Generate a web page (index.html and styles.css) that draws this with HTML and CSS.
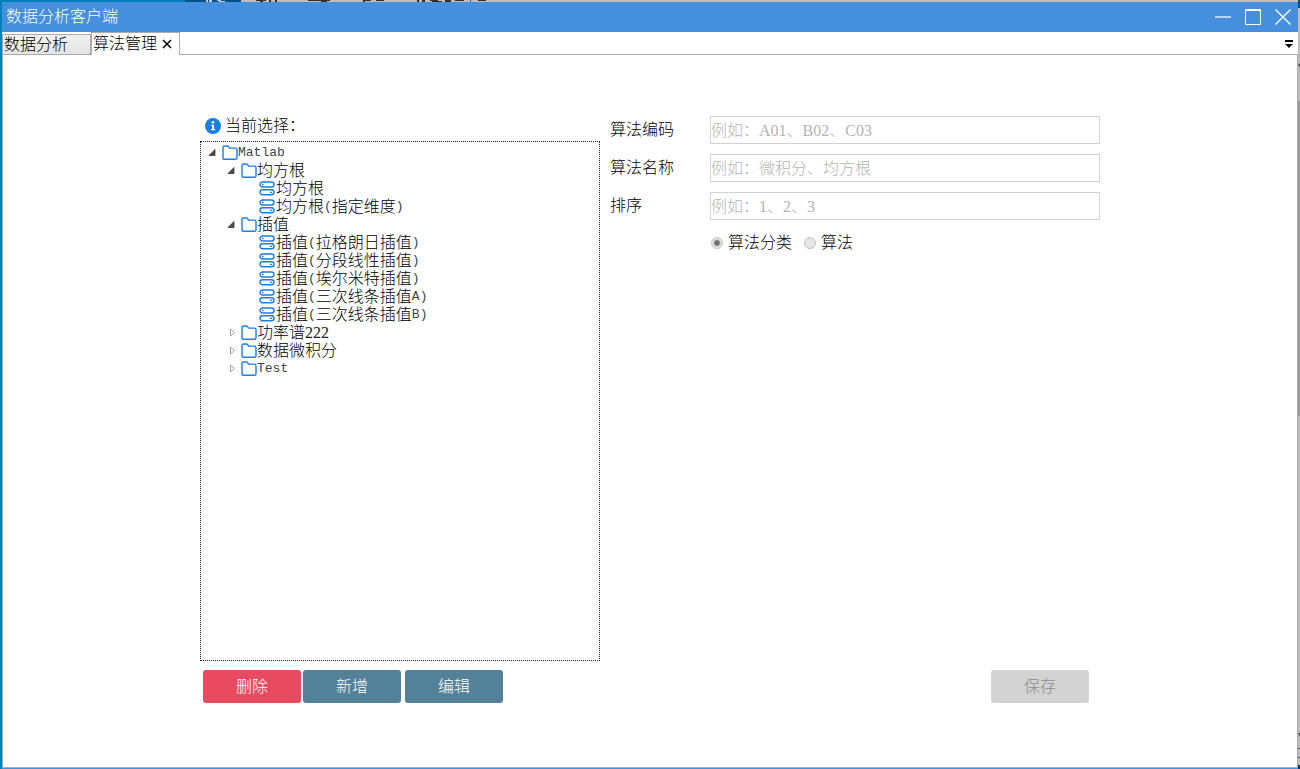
FILE: index.html
```html
<!DOCTYPE html>
<html lang="zh-CN">
<head>
<meta charset="utf-8">
<title>数据分析客户端</title>
<link rel="stylesheet" href="styles.css">
</head>
<body>
<svg class="symbols" aria-hidden="true">
  <symbol id="folder" viewBox="0 0 16 16"><path d="M1 2.7Q1 1 2.6 1H5.4Q6.5 1 7 2.1L7.5 3.1H13.4Q15 3.1 15 4.700V12.700Q15 14.300 13.400 14.300H2.600Q1 14.300 1 12.700Z" fill="#fff" stroke="#1a7ee0" stroke-width="1.4"/></symbol>
  <symbol id="algo" viewBox="0 0 16 16"><g fill="#fff" stroke="#1a7ee0" stroke-width="1.4"><rect x="1" y="1" width="14" height="5" rx="2.5"/><rect x="1" y="8.8" width="14" height="5" rx="2.5"/></g><path d="M3 3.500h1.500M11 11.300h2" stroke="#1a7ee0" stroke-width="1.3"/></symbol>
  <symbol id="open" viewBox="0 0 8 8"><path d="M7 .5V6.500H1Z" fill="#505050" stroke="#262626" stroke-width=".7"/></symbol>
  <symbol id="closed" viewBox="0 0 8 8"><path d="M3.500 0V7L7.500 3.500Z" fill="#fff" stroke="#a0a0a0"/></symbol>
</svg>
<div class="desktop">
  <svg class="sliver-top" width="500" height="2" aria-hidden="true">
    <path d="M0 0H185V2H0Z" fill="#0080b8"/><path d="M185 0H241V2H185Z" fill="#00508a"/>
    <path d="M206 0h2v2h-2zM209 0h3v2h-3zM217 0h4v1h-4zM219 1h6v1h-6z" fill="#b8cbd8"/>
    <path d="M256 0h10v1h-10zM260 1h3v1h-3zM269 0h2v2h-2zM275 0h2v2h-2zM308 0h22v1h-22zM321 1h6v1h-6zM363 0h8v1h-8zM363 1h2v1h-2zM376 0h8v1h-8zM417 0h2v2h-2zM422 0h3v2h-3zM430 0h8v1h-8zM432 1h10v1h-10zM445 0h6v2h-6zM455 0h9v1h-9zM478 0h8v1h-8z" fill="#303030"/>
    <path d="M470 0h1v2h-1z" fill="#2869ae"/>
  </svg>
  <svg class="sliver-right" width="2" height="769" aria-hidden="true">
    <path d="M0 0H2V8H0Z" fill="#00508a"/><path d="M0 101H2V416H0Z" fill="#9a9a9a"/>
    <path d="M0 65l2-2v4zM0 733h2v4zM0 748h2v1h-2zM0 757h2v1h-2z" fill="#444"/><path d="M0 765H2V769H0Z" fill="#003a78"/>
  </svg>
  <main class="window">
    <header class="titlebar">
      <h1 class="title">数据分析客户端</h1>
      <button class="wbtn" aria-label="最小化"><svg width="18" height="18"><path d="M1 9H17" stroke="#b9d3f1" stroke-width="2"/></svg></button>
      <button class="wbtn" aria-label="最大化"><svg width="18" height="18"><path d="M1.500 1.500H16.500V16.500H1.500ZM1 2.500H17" fill="none" stroke="#fff"/></svg></button>
      <button class="wbtn" aria-label="关闭"><svg width="18" height="18"><path d="M1.500 1.500L16.500 16.500M16.500 1.500L1.500 16.500" stroke="#fff" stroke-width="1.4"/></svg></button>
    </header>
    <nav class="tabs">
      <button class="tab">数据分析</button>
      <div class="tab tab-active"><span>算法管理</span><button class="tab-close" aria-label="关闭标签"><svg width="10" height="10"><path d="M1 1L9 9M9 1L1 9" stroke="#000" stroke-width="1.5"/></svg></button></div>
      <button class="tab-menu" aria-label="标签列表"><svg width="8" height="8"><path d="M0 0H8V2H0ZM0 4H8L4 8Z"/></svg></button>
    </nav>
    <section class="content">
      <div class="panel">
        <div class="left">
          <div class="current"><svg width="16" height="16" viewBox="0 0 16 16"><circle cx="8" cy="8" r="8" fill="#1a7ee0"/><circle cx="8" cy="4.200" r="1.300" fill="#fff"/><path d="M6 6.700H9V11H10.200V12.300H6V11H7V8H6Z" fill="#fff"/></svg><span>当前选择：</span></div>
          <ul class="tree">
            <li class="node"><svg class="arrow"><use href="#open"/></svg><svg class="icon"><use href="#folder"/></svg><span class="latin">Matlab</span></li>
            <li class="node level-1"><svg class="arrow"><use href="#open"/></svg><svg class="icon"><use href="#folder"/></svg>均方根</li>
            <li class="node level-2"><svg class="icon"><use href="#algo"/></svg>均方根</li>
            <li class="node level-2"><svg class="icon"><use href="#algo"/></svg>均方根<span class="latin">(</span>指定维度<span class="latin">)</span></li>
            <li class="node level-1"><svg class="arrow"><use href="#open"/></svg><svg class="icon"><use href="#folder"/></svg>插值</li>
            <li class="node level-2"><svg class="icon"><use href="#algo"/></svg>插值<span class="latin">(</span>拉格朗日插值<span class="latin">)</span></li>
            <li class="node level-2"><svg class="icon"><use href="#algo"/></svg>插值<span class="latin">(</span>分段线性插值<span class="latin">)</span></li>
            <li class="node level-2"><svg class="icon"><use href="#algo"/></svg>插值<span class="latin">(</span>埃尔米特插值<span class="latin">)</span></li>
            <li class="node level-2"><svg class="icon"><use href="#algo"/></svg>插值<span class="latin">(</span>三次线条插值<span class="latin">A)</span></li>
            <li class="node level-2"><svg class="icon"><use href="#algo"/></svg>插值<span class="latin">(</span>三次线条插值<span class="latin">B)</span></li>
            <li class="node level-1"><svg class="arrow"><use href="#closed"/></svg><svg class="icon"><use href="#folder"/></svg>功率谱<span class="digits">222</span></li>
            <li class="node level-1"><svg class="arrow"><use href="#closed"/></svg><svg class="icon"><use href="#folder"/></svg>数据微积分</li>
            <li class="node level-1"><svg class="arrow"><use href="#closed"/></svg><svg class="icon"><use href="#folder"/></svg><span class="latin">Test</span></li>
          </ul>
          <div class="actions">
            <button class="btn btn-danger">删除</button><button class="btn">新增</button><button class="btn btn-edit">编辑</button>
          </div>
        </div>
        <form class="form">
          <div class="field"><label for="code">算法编码</label><input class="text" id="code" placeholder="例如：A01、B02、C03" disabled></div>
          <div class="field"><label for="name">算法名称</label><input class="text" id="name" placeholder="例如：微积分、均方根" disabled></div>
          <div class="field"><label for="order">排序</label><input class="text" id="order" placeholder="例如：1、2、3" disabled></div>
          <div class="radios">
            <label class="choice"><input class="radio" type="radio" name="kind" checked disabled>算法分类</label>
            <label class="choice"><input class="radio" type="radio" name="kind" disabled>算法</label>
          </div>
          <button class="btn btn-save" type="button" disabled>保存</button>
        </form>
      </div>
    </section>
  </main>
</div>
</body>
</html>
```
FILE: styles.css
```css
* { box-sizing: border-box; }
body {
  margin: 0;
  color: #000;
  font: 300 16px/18px "Liberation Serif", "Noto Sans CJK SC", sans-serif;
}
button, input { font: inherit; }
button { border: 0; padding: 0; background: none; color: inherit; }
svg { display: block; flex: none; }
.symbols { position: absolute; width: 0; height: 0; }

.desktop {
  position: relative;
  display: flex;
  min-height: 100vh;
  padding: 2px 2px 0;
  background: linear-gradient(90deg, #0080b8 2px, #bdbdbd 2px);
}
.sliver-top { position: absolute; top: 0; left: 0; }
.sliver-right { position: absolute; top: 0; right: 0; }
.window {
  position: relative;
  flex: 1;
  display: flex;
  flex-direction: column;
  background: #fff;
  border-bottom: 1px solid #468fdd;
}

.titlebar {
  display: flex;
  align-items: center;
  gap: 12px;
  height: 30px;
  padding: 0 6px 0 4px;
  background: #468fdd;
  color: #fff;
}
.title { flex: 1; margin: 0; font-size: 16px; font-weight: 300; line-height: 20px; }

.tabs {
  display: flex;
  align-items: flex-end;
  height: 23px;
  box-shadow: inset 0 -1px #acacac;
}
.tab {
  width: 89px;
  height: 21px;
  padding: 0 0 0 2px;
  border: 1px solid #acacac;
  background: linear-gradient(#f1f1f1, #e4e4e4);
  line-height: 18px;
  text-align: left;
}
.tab:first-child { padding-left: 1px; }
.tab-active {
  display: flex;
  align-items: center;
  gap: 5px;
  height: 23px;
  padding-left: 1px;
  border-bottom: 0;
  background: #fff;
}
.tab-menu { align-self: center; margin: 0 5px 0 auto; }

.content {
  flex: 1;
  display: flex;
  justify-content: center;
  padding: 61px 20px 64px;
  border: 1px solid #acacac;
  border-top: 0;
}
.panel {
  flex: 1;
  max-width: 900px;
  display: grid;
  grid-template-columns: 4fr 5fr;
}
.left { display: flex; flex-direction: column; }
.current {
  display: flex;
  align-items: center;
  gap: 4px;
  height: 25px;
  padding: 0 5px 5px;
}
.tree {
  flex: 1;
  margin: 0;
  padding: 2px 7px;
  border: 1px dotted #222;
  list-style: none;
}
.node { display: flex; align-items: center; height: 18px; white-space: nowrap; }
.level-1 { padding-left: 19px; }
.level-2 { padding-left: 51px; }
.arrow { width: 8px; height: 8px; margin-right: 6px; }
.icon { width: 16px; height: 16px; }
.level-2 .icon { margin-right: 1px; }
.latin { color: #444; font-family: "Liberation Mono", monospace; font-size: 13px; font-weight: 400; }
.digits { color: #222; }

.btn {
  width: 98px;
  height: 33px;
  border-radius: 3px;
  background: #528198;
  color: #fff;
}
.actions { display: flex; gap: 2px; padding: 9px 3px 0; }
.btn-danger { background: #e84a61; }
.btn-edit { margin-left: 2px; }
.btn-save { margin: auto 11px 0 auto; background: #d3d3d3; color: #8c8c8c; }

.form { display: flex; flex-direction: column; gap: 10px; padding-left: 10px; }
.field { display: flex; align-items: center; }
.field label { width: 100px; }
.text {
  flex: 1;
  min-width: 0;
  height: 28px;
  padding: 1px 0 0;
  border: 1px solid #d3d3d3;
  border-radius: 0;
  background: #fff;
}
.text::placeholder { color: #b4b4b4; opacity: 1; }
.radios { display: flex; gap: 12px; padding: 4px 0 0 101px; }
.choice { display: flex; align-items: center; gap: 5px; }
.radio {
  appearance: none;
  width: 12px;
  height: 12px;
  margin: 0;
  border: 1px solid #c3c3c3;
  border-radius: 50%;
  background: #e6e6e6;
}
.radio:checked { background: radial-gradient(circle, #707070 2px, #e6e6e6 4px); }
```
